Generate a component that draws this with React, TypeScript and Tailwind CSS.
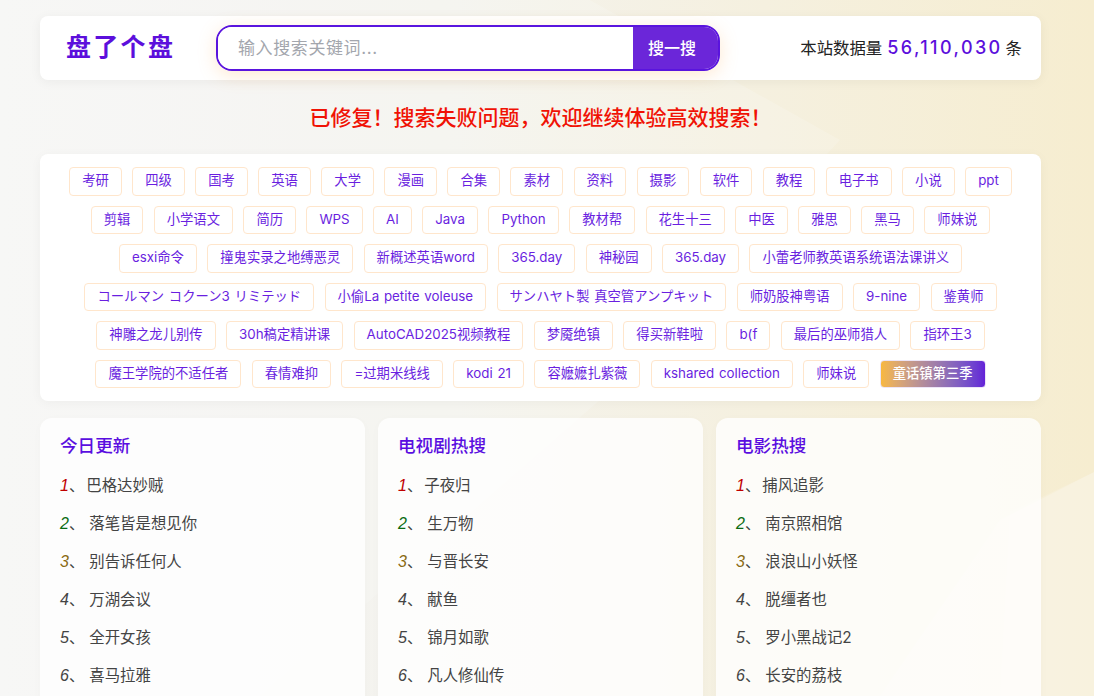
import React from "react"

const tagRows = [
  ["考研", "四级", "国考", "英语", "大学", "漫画", "合集", "素材", "资料", "摄影", "软件", "教程", "电子书", "小说", "ppt"],
  ["剪辑", "小学语文", "简历", "WPS", "AI", "Java", "Python", "教材帮", "花生十三", "中医", "雅思", "黑马", "师妹说"],
  ["esxi命令", "撞鬼实录之地缚恶灵", "新概述英语word", "365.day", "神秘园", "365.day", "小蕾老师教英语系统语法课讲义"],
  ["コールマン コクーン3 リミテッド", "小偷La petite voleuse", "サンハヤト製 真空管アンプキット", "师奶股神粤语", "9-nine", "鉴黄师"],
  ["神雕之龙儿别传", "30h稿定精讲课", "AutoCAD2025视频教程", "梦魇绝镇", "得买新鞋啦", "b(f", "最后的巫师猎人", "指环王3"],
  ["魔王学院的不适任者", "春情难抑", "=过期米线线", "kodi 21", "容嬷嬷扎紫薇", "kshared collection", "师妹说"],
]

const lists = [
  { title: "今日更新", items: ["巴格达妙贼", "落笔皆是想见你", "别告诉任何人", "万湖会议", "全开女孩", "喜马拉雅"] },
  { title: "电视剧热搜", items: ["子夜归", "生万物", "与晋长安", "献鱼", "锦月如歌", "凡人修仙传"] },
  { title: "电影热搜", items: ["捕风追影", "南京照相馆", "浪浪山小妖怪", "脱缰者也", "罗小黑战记2", "长安的荔枝"] },
]

const rankColors = ["text-[#c00000]", "text-[#0b6b12]", "text-[#8a6a12]"]

const Tag = ({ label }: { label: string }) => (
  <a className="flex h-[28.5px] shrink-0 items-center whitespace-nowrap rounded-[4px] border border-[#ffe6cc] bg-white px-3 text-[13.33px] text-[#6a1fe0] [word-spacing:1px]">
    {label}
  </a>
)

const Backdrop = () => (
  <svg className="absolute inset-0 h-full w-full" viewBox="0 0 1094 696" preserveAspectRatio="none">
    <defs>
      <linearGradient id="bg" x1="0" y1="0" x2="1" y2="0">
        <stop offset="0" stopColor="#f6f6f5" />
        <stop offset="0.4" stopColor="#f4f3ee" />
        <stop offset="1" stopColor="#f6edd0" />
      </linearGradient>
    </defs>
    <rect width="1094" height="696" fill="url(#bg)" />
    <polygon points="0,0 590,0 840,140 600,400 260,696 0,696" fill="#ffffff" opacity="0.16" />
    <polygon points="1094,472 1000,520 880,696 1094,696" fill="#ffffff" opacity="0.22" />
    <polygon points="1094,472 1010,512 1000,696 1094,696" fill="#ffffff" opacity="0.12" />
  </svg>
)

export default function App() {
  return (
    <div
      className="relative h-screen overflow-hidden"
      style={{ fontFamily: 'Inter, "Noto Sans CJK SC", sans-serif' }}
    >
      <Backdrop />
      <div className="relative ml-10 w-[1001px]">
        <header className="mt-4 flex h-16 items-center rounded-lg bg-white pl-[26px] pr-[19px] shadow-[0_2px_12px_rgba(0,0,0,0.05)]">
          <h1 className="w-[150px] text-[25px] font-bold tracking-[2.3px] text-[#5c0fdc]">盘了个盘</h1>
          <div className="flex h-[46px] w-[504px] overflow-hidden rounded-2xl border-2 border-[#5a14de] shadow-[0_4px_18px_rgba(255,170,80,0.26)]">
            <input
              placeholder="输入搜索关键词..."
              className="min-w-0 flex-1 bg-white pl-5 pt-[2px] text-[17px] tracking-[0.6px] text-gray-700 outline-none placeholder:text-[#a3a6ad]"
            />
            <button className="w-[85px] bg-[#6b26d9] pr-[7px] text-base font-medium text-white">搜一搜</button>
          </div>
          <div className="ml-auto flex items-center text-[16.4px] text-[#222]">
            本站数据量
            <span className="ml-[5px] mr-[3px] text-lg font-medium tracking-[2.4px] text-[#5c0fdc]">56,110,030</span>
            条
          </div>
        </header>

        <p className="mt-6 h-[28px] text-center text-[21px] font-medium leading-7 text-[#f01205]">
          已修复！搜索失败问题，欢迎继续体验高效搜索！
        </p>

        <section className="mt-[22px] flex flex-col gap-[10px] rounded-lg bg-white px-3 py-[13px] shadow-[0_2px_12px_rgba(0,0,0,0.04)]">
          {tagRows.map((row, i) => (
            <div key={i} className="flex justify-center gap-[10.4px]">
              {row.map((label, j) => (
                <Tag key={j} label={label} />
              ))}
              {i === 5 && (
                <a className="flex h-[28.5px] items-center whitespace-nowrap rounded-[4px] border border-[#ece4f7] bg-gradient-to-r from-[#f8b83e] to-[#6420d8] px-3 text-[13.33px] font-medium text-white">
                  童话镇第三季
                </a>
              )}
            </div>
          ))}
        </section>

        <div className="mt-[17px] grid grid-cols-3 gap-[13px]">
          {lists.map((list) => (
            <section key={list.title} className="h-[320px] rounded-xl bg-white/80 px-5 pt-[17px] shadow-[0_2px_12px_rgba(0,0,0,0.02)]">
              <h2 className="text-[17.6px] font-medium leading-[22px] text-[#5a0ee0]">{list.title}</h2>
              <ul className="mt-[10px]">
                {list.items.map((item, i) => (
                  <li key={item} className="flex h-[38px] items-center text-[15.4px] text-[#444]">
                    <span
                      className={`text-base italic ${rankColors[i] ?? "text-[#444]"}`}
                      style={{ fontFamily: '"Liberation Sans", sans-serif' }}
                    >
                      {i + 1}
                    </span>
                    <span>、</span>
                    <span className={i === 0 ? "ml-[2px]" : "ml-[5px]"}>{item}</span>
                  </li>
                ))}
              </ul>
            </section>
          ))}
        </div>
      </div>
    </div>
  )
}
